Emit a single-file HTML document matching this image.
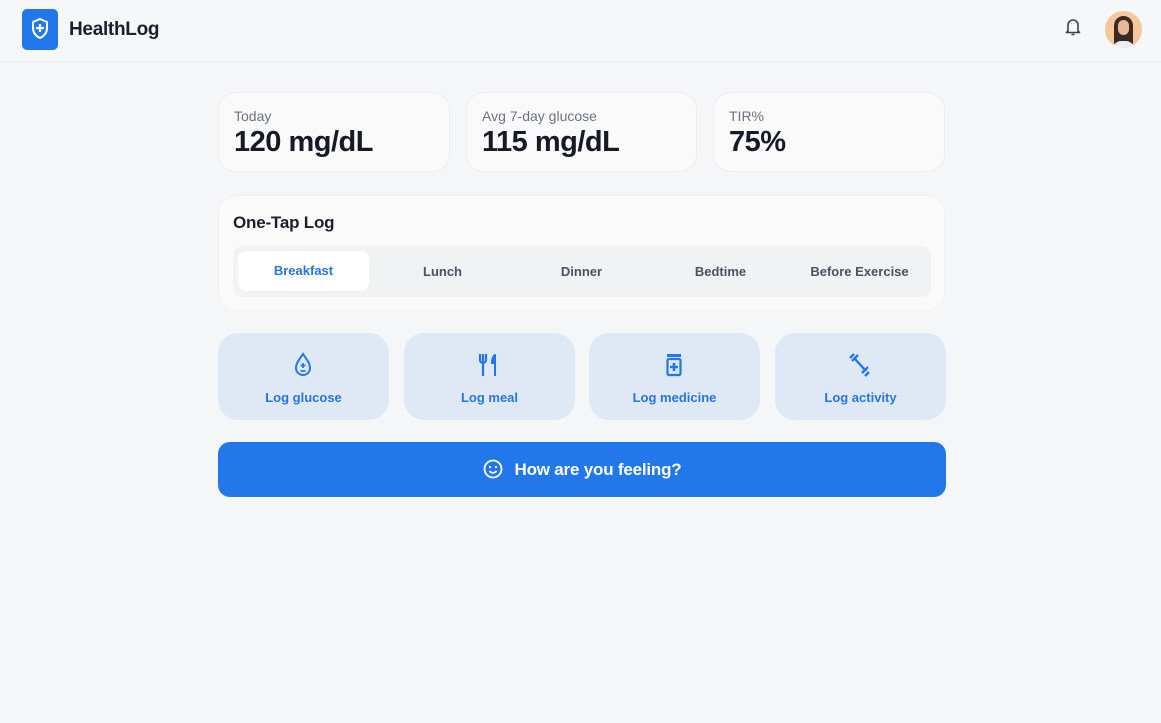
<!DOCTYPE html>
<html><head><meta charset="utf-8"><style>
*{box-sizing:border-box;margin:0;padding:0}
body{width:1161px;height:723px;background:#f5f6f8;font-family:"Liberation Sans",sans-serif;position:relative;overflow:hidden;color:#111827}
.hdr{position:absolute;left:0;top:0;width:1161px;height:62px;border-bottom:1px solid #eceef1;background:#f6f7f9}
.logo{position:absolute;left:22px;top:9px;width:36px;height:41px;background:#2277ea;border-radius:5px}
.brand{position:absolute;left:69px;top:19px;font-size:19px;font-weight:bold;color:#1a1f2b;letter-spacing:-0.3px}
.card{position:absolute;background:#fafafb;border:1px solid #eceef1;border-radius:18px}
.lbl{position:absolute;left:15px;top:15px;font-size:14px;color:#6b7280}
.val{position:absolute;left:15px;top:33px;font-size:29px;font-weight:bold;color:#151a26;letter-spacing:-0.5px}
.seg{position:absolute;left:233px;top:246px;width:698px;height:51px;background:#f1f2f4;border-radius:10px}
.tab{position:absolute;top:0;width:131px;height:51px;line-height:51px;text-align:center;font-size:13px;font-weight:bold;color:#4b5260}
.tile{position:absolute;top:333px;width:171px;height:87px;background:#dfe8f5;border-radius:20px;text-align:center}
.tile svg{position:absolute;left:73px;top:19px}
.tile span{position:absolute;left:0;right:0;top:57px;font-size:13px;font-weight:bold;color:#2a74e0}
.btn{position:absolute;left:218px;top:442px;width:728px;height:55px;background:#2277ea;border-radius:12px;color:#fff;font-size:17px;font-weight:bold;line-height:55px;text-align:center;letter-spacing:-0.2px}
</style></head><body>
<div class="hdr">
<div class="logo"><svg width="36" height="41" viewBox="0 0 36 41"><path d="M18 10 L25 13 V19 C25 24 22 27 18 29 C14 27 11 24 11 19 V13 Z" fill="none" stroke="#fff" stroke-width="2"/><path d="M18 15v8M14 19h8" stroke="#fff" stroke-width="2.2"/></svg></div>
<div class="brand">HealthLog</div>
<svg style="position:absolute;left:1064px;top:17px" width="18" height="20" viewBox="0 0 18 20"><path d="M4 14V8a5 5 0 0 1 10 0v6l1.5 1.5h-13Z M7.5 17.5h3" fill="none" stroke="#374151" stroke-width="1.6" stroke-linejoin="round"/></svg>
<div style="position:absolute;left:1105px;top:11px;width:37px;height:37px;border-radius:50%;background:#f4c89a;overflow:hidden"><div style="position:absolute;left:9px;top:5px;width:19px;height:30px;background:#3a2a22;border-radius:10px 10px 4px 4px"></div><div style="position:absolute;left:13px;top:9px;width:11px;height:15px;background:#e7b898;border-radius:6px"></div><div style="position:absolute;left:8px;top:30px;width:21px;height:10px;background:#e9eef2;border-radius:8px 8px 0 0"></div></div>
</div>

<div class="card" style="left:218px;top:92px;width:232px;height:80px"><div class="lbl">Today</div><div class="val">120 mg/dL</div></div>
<div class="card" style="left:466px;top:92px;width:231px;height:80px"><div class="lbl">Avg 7-day glucose</div><div class="val">115 mg/dL</div></div>
<div class="card" style="left:713px;top:92px;width:232px;height:80px"><div class="lbl">TIR%</div><div class="val">75%</div></div>

<div class="card" style="left:218px;top:195px;width:727px;height:116px;border-color:#f1f2f4"><div style="position:absolute;left:14px;top:17px;font-size:17px;font-weight:bold;color:#1a1f2b;letter-spacing:-0.2px">One-Tap Log</div></div>
<div class="seg">
<div class="tab" style="left:5px;top:5px;height:40px;line-height:40px;background:#fff;border-radius:8px;color:#2a74e0">Breakfast</div>
<div class="tab" style="left:144px">Lunch</div>
<div class="tab" style="left:283px">Dinner</div>
<div class="tab" style="left:422px">Bedtime</div>
<div class="tab" style="left:561px">Before Exercise</div>
</div>

<div class="tile" style="left:218px"><svg width="24" height="26" viewBox="0 0 24 26"><path d="M12 2 C16 8 19 11 19 16 a7 7 0 0 1 -14 0 C5 11 8 8 12 2Z" fill="none" stroke="#2277ea" stroke-width="2"/><path d="M12 11v5M9.5 13.5h5M9.5 19h5" stroke="#2277ea" stroke-width="1.8"/></svg><span>Log glucose</span></div>
<div class="tile" style="left:404px"><svg width="24" height="26" viewBox="0 0 24 26"><path d="M6 2v8M3 2v6a3 3 0 0 0 6 0V2M6 10v14" stroke="#2277ea" stroke-width="2.2" fill="none"/><path d="M18 2c-3 1-4 5-4 10h3v12h2V2Z" fill="#2277ea"/></svg><span>Log meal</span></div>
<div class="tile" style="left:589px"><svg width="24" height="26" viewBox="0 0 24 26"><rect x="5" y="2" width="14" height="3" fill="#2277ea"/><rect x="5.5" y="7" width="13" height="16" rx="1.5" fill="none" stroke="#2277ea" stroke-width="2.2"/><path d="M12 11v8M8 15h8" stroke="#2277ea" stroke-width="2.6"/></svg><span>Log medicine</span></div>
<div class="tile" style="left:775px"><svg width="24" height="26" viewBox="0 0 24 26"><path d="M7 7l11 12" stroke="#2277ea" stroke-width="2.4"/><path d="M2 6l4-4M4 9l6-6M14 21l6-6M17 24l4-4" stroke="#2277ea" stroke-width="2.4"/></svg><span>Log activity</span></div>

<div class="btn"><svg style="vertical-align:-4px;margin-right:12px" width="20" height="20" viewBox="0 0 20 20"><circle cx="10" cy="10" r="8.5" fill="none" stroke="#fff" stroke-width="1.8"/><circle cx="7" cy="8" r="1.1" fill="#fff"/><circle cx="13" cy="8" r="1.1" fill="#fff"/><path d="M6.5 12c2 2.5 5 2.5 7 0" fill="none" stroke="#fff" stroke-width="1.6"/></svg>How are you feeling?</div>
</body></html>
